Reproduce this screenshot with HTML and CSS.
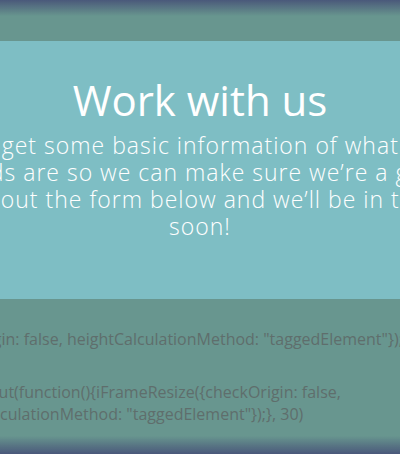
FILE: index.html
```html
<!DOCTYPE html>
<html lang="en">
<head>
<meta charset="utf-8">
<title>Work with us</title>
<link rel="stylesheet" href="styles.css">
</head>
<body>
<div class="page">
  <div class="top-band"></div>
  <section class="hero">
    <h1 class="hero-title">Work with us</h1>
    <div class="hero-text">
      <p class="line">Let’s get some basic information of what your</p>
      <p class="line">needs are so we can make sure we’re a good</p>
      <p class="line line-shift">Fill out the form below and we’ll be in touch</p>
      <p class="line">soon!</p>
    </div>
  </section>
  <section class="code">
    <p class="code-line first">iFrameResize({checkOrigin: false, heightCalculationMethod: "taggedElement"});},</p>
    <div class="code-block">
      <p class="code-line">setTimeout(function(){iFrameResize({checkOrigin: false,</p>
      <p class="code-line">heightCalculationMethod: "taggedElement"});}, 30)</p>
    </div>
  </section>
</div>
<div class="vignette"></div>
</body>
</html>
```
FILE: styles.css
```css
html, body {
  margin: 0;
  padding: 0;
}
body {
  width: 400px;
  height: 454px;
  overflow: hidden;
  background: #68968f;
  font-family: "Open Sans", "DejaVu Sans", sans-serif;
}
.page {
  display: flex;
  flex-direction: column;
}
.top-band {
  height: 41px;
  background: #68968f;
}
.hero {
  height: 258px;
  background: #7ebec4;
  color: #ffffff;
  display: flex;
  flex-direction: column;
  align-items: center;
  padding-top: 30px;
  box-sizing: border-box;
}
.hero-title {
  margin: 0;
  font-size: 42px;
  font-weight: 500;
  line-height: 58px;
}
.hero-text {
  width: 700px;
  display: flex;
  flex-direction: column;
  align-items: center;
  margin-top: 3px;
}
.line {
  margin: 0;
  white-space: nowrap;
  font-size: 23px;
  font-weight: 300;
  letter-spacing: 1px;
  line-height: 27px;
}
.line-shift {
  padding-left: 18px;
}
.code {
  flex: 1;
  color: #5f6e6c;
  font-size: 16px;
  line-height: 22px;
  padding-top: 29px;
}
.code-line {
  margin: 0;
  white-space: nowrap;
}
.code-line.first {
  margin-left: -182px;
}
.code-block {
  margin-top: 31px;
  margin-left: -70px;
}
.vignette {
  position: fixed;
  inset: 0;
  pointer-events: none;
  background: linear-gradient(to bottom, #4a587a 0px, rgba(74,88,122,0) 16px, rgba(74,88,122,0) 436px, #4a587a 454px);
}
```
